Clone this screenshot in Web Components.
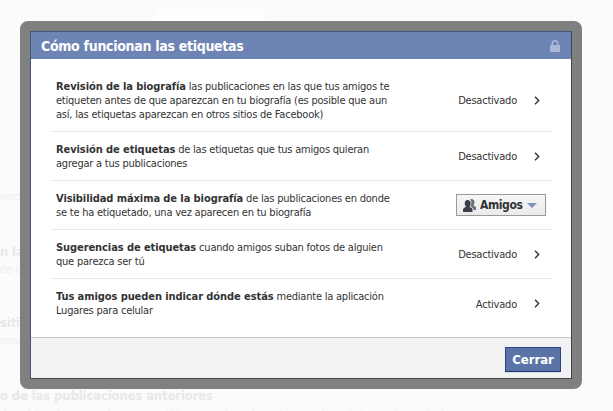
<!DOCTYPE html>
<html>
<head>
<meta charset="utf-8">
<style>
  html, body { margin: 0; height: 100%; overflow: hidden; background: #fbfbfb; }
  body { font-family: "DejaVu Sans Condensed", "DejaVu Sans", sans-serif; font-stretch: condensed; }
  tag-row b { letter-spacing: -.08px; }
</style>
</head>
<body>
<page-backdrop></page-backdrop>
<tag-dialog heading="Cómo funcionan las etiquetas">
  <tag-row value="Desactivado" first><b>Revisión de la biografía</b> las publicaciones en las que tus amigos te<br>etiqueten antes de que aparezcan en tu biografía (es posible que aun<br>así, las etiquetas aparezcan en otros sitios de Facebook)</tag-row>
  <tag-row value="Desactivado"><b>Revisión de etiquetas</b> de las etiquetas que tus amigos quieran<br>agregar a tus publicaciones</tag-row>
  <tag-row audience="Amigos"><b>Visibilidad máxima de la biografía</b> de las publicaciones en donde<br>se te ha etiquetado, una vez aparecen en tu biografía</tag-row>
  <tag-row value="Desactivado"><b>Sugerencias de etiquetas</b> cuando amigos suban fotos de alguien<br>que parezca ser tú</tag-row>
  <tag-row value="Activado" last><b>Tus amigos pueden indicar dónde estás</b> mediante la aplicación<br>Lugares para celular</tag-row>
</tag-dialog>
<script>
	const FONT = `"DejaVu Sans Condensed", "DejaVu Sans", sans-serif`;

	class PageBackdrop extends HTMLElement {
		constructor() {
			super();
			this.attachShadow({ mode: 'open' }).innerHTML = `
			<style>
				:host { display: block; height: 411px; overflow: hidden; color: #eeeeee; font-family: ${FONT}; font-stretch: condensed; font-size: 11px; }
				#box { width: 110px; height: 30px; margin: 6px 0 0 155px; background: #fdfdfd; border-radius: 3px; }
				#col { padding-top: 154px; width: 20px; white-space: nowrap; }
				h4 { margin: 0; font-size: 13px; line-height: 17px; color: #e8e8e8; letter-spacing: -.15px; }
				p { margin: 0; line-height: 14px; }
			</style>
			<div id="box"></div>
			<div id="col">
				<p>pectas</p>
				<h4 style="margin-top:39px">n las</h4>
				<p style="margin-top:3px">de cu</p>
				<h4 style="margin-top:37px">sitios</h4>
				<p style="margin-top:3px">mparti</p>
				<h4 style="margin-top:39px">o de las publicaciones anteriores</h4>
				<p style="margin-top:4px">de publicaciones que has compartido con amigos de amigos, amigos de tus amigos y todos</p>
			</div>`;
		}
	}

	class TagDialog extends HTMLElement {
		constructor() {
			super();
			const root = this.attachShadow({ mode: 'open' });
			root.innerHTML = `
			<style>
				:host { display: flex; flex-direction: column; position: absolute; left: 20px; top: 21px; width: 562px; height: 368px; box-sizing: border-box; border: 10px solid #808080; border-radius: 8px; font-family: ${FONT}; font-stretch: condensed; }
				#panel { flex: 1; display: flex; flex-direction: column; border: 1px solid; border-color: #42557f #40454f #40454f #42557f; background: #fff; min-height: 0; }
				header { height: 27px; flex: none; display: flex; align-items: center; justify-content: space-between; padding: 0 11px 0 10px; background: #6d84b4; color: #fff; font-size: 14px; font-weight: bold; letter-spacing: -.3px; }
				#body { flex: 1; padding: 3px 19px 0 20px; }
				footer { flex: none; height: 41px; box-sizing: border-box; border-top: 1px solid #c4c4c4; background: #f2f2f2; display: flex; justify-content: flex-end; align-items: flex-start; padding: 9px 10px 0 0; }
				button { width: 56px; height: 25px; padding: 0 0 1px; background: #5b74a8; border: 1px solid #29447e; border-bottom-color: #1a356e; color: #fff; font: bold 13px ${FONT}; font-stretch: condensed; box-shadow: 0 1px 0 #d9dfea; }
			</style>
			<div id="panel">
				<header>
					<span id="title"></span>
					<svg width="10" height="12" viewBox="0 0 10 12"><path fill="#aab8d6" fill-rule="evenodd" d="M0 5h1.500V3.500a3.500 3.500 0 0 1 7 0V5H10v7H0z M3 5h4V3.500a2 2 0 0 0-4 0z"/></svg>
				</header>
				<div id="body"><slot></slot></div>
				<footer><button>Cerrar</button></footer>
			</div>`;
			root.getElementById('title').textContent = this.getAttribute('heading');
		}
	}

	class TagRow extends HTMLElement {
		constructor() {
			super();
			const root = this.attachShadow({ mode: 'open' });
			const audience = this.getAttribute('audience');
			const right = audience
				? `<span id="pick"><svg width="13" height="13" viewBox="0 0 13 13"><path fill="#6a6f78" d="M8.500 0C10.300 0 11.500 1.300 11.500 3.200c0 1.400-.6 2.500-1.200 3 1.200.6 2.700 1.200 2.700 2.500V11H10.500c0-1.700-1.600-2.800-3-3.500.5-1 .9-2.200.9-3.500 0-1.500-.4-2.800-1.300-3.500C7.500.2 8 0 8.500 0z"/><path fill="#3c3f47" d="M4.500 1C6.500 1 7.700 2.400 7.700 4.400c0 1.500-.7 2.800-1.400 3.400C7.800 8.500 9.500 9.200 9.500 10.700V13H0v-2.300C0 9.200 1.700 8.500 3.200 7.800 2.500 7.200 1.700 5.900 1.700 4.400 1.700 2.400 2.700 1 4.500 1z"/></svg><span id="who">${audience}</span><i></i></span>`
				: `<span id="val">${this.getAttribute('value')}</span><svg id="chev" width="6" height="9" viewBox="0 0 6 9"><path fill="none" stroke="#333" stroke-width="1.400" d="M1 .8 4.700 4.500 1 8.200"/></svg>`;
			root.innerHTML = `
			<style>
				:host { display: flex; align-items: center; height: 49px; box-sizing: border-box; border-bottom: 1px solid #e9e9e9; padding: 0 12px 0 5px; color: #333; font-size: 11px; line-height: 14px; letter-spacing: -.22px; }
				:host([first]) { height: 70px; padding-top: 7px; }
				:host([last]) { border-bottom: 0; }
				#text { flex: 1; padding-top: 1px; }
				#right { display: flex; align-items: center; justify-content: flex-end; gap: 17px; }
				#val { padding-top: 2px; }
				#chev { flex: none; }
				#pick { display: flex; align-items: center; box-sizing: border-box; width: 90px; height: 22px; margin-right: -6px; padding: 0 0 0 6px; border: 1px solid #999; background: linear-gradient(#f5f5f5, #ebebeb); color: #333; font-weight: bold; font-size: 12px; letter-spacing: -.4px; }
				#pick svg { margin-right: 4px; }
				#pick i { margin-left: 5px; border: solid transparent; border-width: 5px 5.500px 0; border-top-color: #7d92bd; }
			</style>
			<div id="text"><slot></slot></div>
			<div id="right">${right}</div>`;
		}
	}

	customElements.define('page-backdrop', PageBackdrop);
	customElements.define('tag-dialog', TagDialog);
	customElements.define('tag-row', TagRow);
</script>
</body>
</html>
